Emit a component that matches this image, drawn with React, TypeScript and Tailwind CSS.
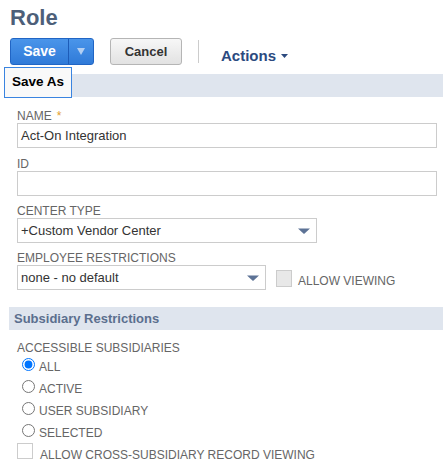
import React from "react";

function Label({ children, className = "" }: { children: React.ReactNode; className?: string }) {
  return (
    <div className={"text-[12px] leading-[13px] uppercase text-[#666666] " + className}>{children}</div>
  );
}

function SelectArrow() {
  return (
    <svg width="12" height="6" viewBox="0 0 12 6" className="block">
      <path d="M0 0.5 H12 L6.6 5.6 Q6 6 5.4 5.6 Z" fill="#5d7396" />
    </svg>
  );
}

function Radio({ label, checked = false }: { label: string; checked?: boolean }) {
  return (
    <div className="flex h-[22px] items-start">
      <input
        type="radio"
        name="subs"
        defaultChecked={checked}
        className="m-0 mt-[4px] h-[13px] w-[13px]"
      />
      <span className="ml-[4px] mt-[6px] text-[12px] leading-[14px] text-[#666666]">{label}</span>
    </div>
  );
}

export default function App() {
  return (
    <div className="relative h-[467px] w-[443px] overflow-hidden bg-white font-['Liberation_Sans',Arial,sans-serif]">
      <div className="pl-[10px] pt-[5px] text-[22px] font-bold leading-[26px] text-[#4d5f79]">Role</div>

      <div className="mt-[7px] flex h-[27px] items-center pl-[10px]">
        <div className="flex h-[27px] w-[84px] rounded-[3px] border border-[#2165c4] bg-gradient-to-b from-[#4a95ea] to-[#2f7ad8]">
          <div className="flex w-[57px] items-center justify-center text-[14px] font-bold text-white">Save</div>
          <div className="flex flex-1 items-center justify-center border-l border-[#1d5cb8]">
            <svg width="8" height="7" viewBox="0 0 8 7" className="block">
              <path d="M0 0 H8 L4 7 Z" fill="#b3cff2" />
            </svg>
          </div>
        </div>
        <div className="ml-[16px] flex h-[27px] w-[72px] items-center justify-center rounded-[3px] border border-[#b5b5b5] bg-gradient-to-b from-[#f7f7f7] to-[#e2e2e2] text-[13px] font-bold text-[#333333]">
          Cancel
        </div>
        <div className="ml-[16px] h-[23px] w-px bg-[#cccccc]" />
        <div className="ml-[22px] mt-[8px] flex items-center text-[15px] font-bold leading-[17px] text-[#2c4a7f]">
          <span>Actions</span>
          <svg width="7" height="4" viewBox="0 0 7 4" className="ml-[5px] block">
            <path d="M0 0 H7 L3.5 4 Z" fill="#2c4a7f" />
          </svg>
        </div>
      </div>

      <div className="ml-[9px] mt-[9px] h-[23px] bg-[#dfe5ee]" />

      <div className="absolute left-[4px] top-[67px] flex h-[31px] w-[68px] items-center border border-[#3a84e0] bg-[#f9f9f9] pl-[7px] text-[13.5px] font-bold text-black">
        Save As
      </div>

      <div className="pl-[17px]">
        <Label className="mt-[13px]">
          NAME<span className="ml-[5px] text-[#e3a02f]">*</span>
        </Label>
        <div className="flex h-[25px] w-[420px] items-center border border-[#cccccc] pl-[3px] text-[13px] text-[#333333]">
          Act-On Integration
        </div>

        <Label className="mt-[10px]">ID</Label>
        <div className="h-[25px] w-[420px] border border-[#cccccc]" />

        <Label className="mt-[9px]">Center Type</Label>
        <div className="flex h-[25px] w-[300px] items-center justify-between border border-[#cccccc] pl-[3px] pr-[6px] text-[13px] text-[#333333]">
          <span>+Custom Vendor Center</span>
          <SelectArrow />
        </div>

        <Label className="mt-[9px]">Employee Restrictions</Label>
        <div className="flex items-start">
          <div className="flex h-[25px] w-[249px] items-center justify-between border border-[#cccccc] pl-[3px] pr-[6px] text-[13px] text-[#333333]">
            <span>none - no default</span>
            <SelectArrow />
          </div>
          <div className="ml-[10px] mt-[5px] h-[17px] w-[16px] border border-[#cccccc] bg-[#e8e8e8]" />
          <span className="ml-[6px] mt-[10px] text-[12px] leading-[13px] text-[#666666]">ALLOW VIEWING</span>
        </div>
      </div>

      <div className="ml-[9px] mt-[17px] h-[23px] bg-[#dfe5ee] pl-[5px] text-[13px] font-bold leading-[23px] text-[#5b6f8e]">
        Subsidiary Restrictions
      </div>

      <Label className="ml-[17px] mt-[12px]">Accessible Subsidiaries</Label>
      <div className="-mt-px pl-[22px]">
        <Radio label="ALL" checked />
        <Radio label="ACTIVE" />
        <Radio label="USER SUBSIDIARY" />
        <Radio label="SELECTED" />
      </div>
      <div className="mt-[1px] flex items-start pl-[17px]">
        <div className="h-[16px] w-[16px] border border-[#cccccc] bg-white" />
        <span className="ml-[7px] mt-[6px] text-[12px] leading-[13px] text-[#666666]">
          ALLOW CROSS-SUBSIDIARY RECORD VIEWING
        </span>
      </div>
    </div>
  );
}
